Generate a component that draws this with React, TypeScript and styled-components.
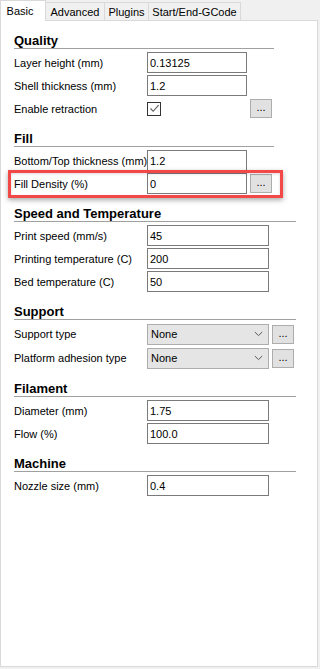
import styled, { createGlobalStyle, css } from "styled-components"

type FieldType = {
    label: string
    kind: 'text' | 'check' | 'select'
    value?: string
    more?: boolean
    highlight?: boolean
}

type SectionType = {
    title: string
    width: number
    control: number
    fields: FieldType[]
}

const tabs = [
    { title: 'Basic', width: 46 },
    { title: 'Advanced', width: 59 },
    { title: 'Plugins', width: 44 },
    { title: 'Start/End-GCode', width: 92 },
]

const sections: SectionType[] = [
    {
        title: 'Quality', width: 260, control: 100, fields: [
            { label: 'Layer height (mm)', kind: 'text', value: '0.13125' },
            { label: 'Shell thickness (mm)', kind: 'text', value: '1.2' },
            { label: 'Enable retraction', kind: 'check', more: true },
        ]
    },
    {
        title: 'Fill', width: 260, control: 100, fields: [
            { label: 'Bottom/Top thickness (mm)', kind: 'text', value: '1.2' },
            { label: 'Fill Density (%)', kind: 'text', value: '0', more: true, highlight: true },
        ]
    },
    {
        title: 'Speed and Temperature', width: 282, control: 122, fields: [
            { label: 'Print speed (mm/s)', kind: 'text', value: '45' },
            { label: 'Printing temperature (C)', kind: 'text', value: '200' },
            { label: 'Bed temperature (C)', kind: 'text', value: '50' },
        ]
    },
    {
        title: 'Support', width: 282, control: 122, fields: [
            { label: 'Support type', kind: 'select', value: 'None', more: true },
            { label: 'Platform adhesion type', kind: 'select', value: 'None', more: true },
        ]
    },
    {
        title: 'Filament', width: 282, control: 122, fields: [
            { label: 'Diameter (mm)', kind: 'text', value: '1.75' },
            { label: 'Flow (%)', kind: 'text', value: '100.0' },
        ]
    },
    {
        title: 'Machine', width: 282, control: 122, fields: [
            { label: 'Nozzle size (mm)', kind: 'text', value: '0.4' },
        ]
    },
]

const Field = ({ field, control }: { field: FieldType, control: number }) => {
    return (
        <Row $control={control} $highlight={field.highlight} $tall={field.kind === 'select'}>
            <Label>{field.label}</Label>
            {field.kind === 'text' && <TextInput readOnly value={field.value} />}
            {field.kind === 'check' && (
                <CheckBox>
                    <svg width="11" height="11" viewBox="0 0 11 11">
                        <path d="M1.5 5.5 L4.2 8.3 L9.6 2.2" fill="none" stroke="#5a5a5a" strokeWidth="1.1" />
                    </svg>
                </CheckBox>
            )}
            {field.kind === 'select' && (
                <Combo>
                    <span>{field.value}</span>
                    <svg width="9" height="6" viewBox="0 0 9 6">
                        <path d="M0.8 1 L4.5 4.6 L8.2 1" fill="none" stroke="#5a5a5a" strokeWidth="1" />
                    </svg>
                </Combo>
            )}
            {field.more && <MoreButton>...</MoreButton>}
        </Row>
    )
}

export default function App() {
    return (
        <>
            <GlobalStyle />
            <Window>
                <TabBar>
                    {tabs.map((t, i) => (
                        <Tab key={t.title} $active={i === 0} $width={t.width}>{t.title}</Tab>
                    ))}
                    <TabFiller />
                </TabBar>
                <Panel>
                    {sections.map(s => (
                        <Section key={s.title} $width={s.width}>
                            <Heading>{s.title}</Heading>
                            {s.fields.map(f => (
                                <Field key={f.label} field={f} control={s.control} />
                            ))}
                        </Section>
                    ))}
                </Panel>
            </Window>
        </>
    )
}

const GlobalStyle = createGlobalStyle`
    html, body {
        margin: 0;
        padding: 0;
        background: #f0f0f0;
    }
    body {
        font-family: "Liberation Sans", Arial, sans-serif;
        font-size: 11px;
        color: #000;
    }
`

const Window = styled.div`
    width: 320px;
    height: 669px;
    display: flex;
    flex-direction: column;
    background: #f0f0f0;
`

const TabBar = styled.div`
    display: flex;
    align-items: flex-end;
    width: 318px;
    height: 21px;
`

const Tab = styled.div<{ $active?: boolean, $width: number }>`
    box-sizing: border-box;
    display: flex;
    align-items: center;
    justify-content: center;
    width: ${p => p.$width}px;
    height: 19px;
    background: #f0f0f0;
    border-top: 1px solid #d9d9d9;
    border-right: 1px solid #d9d9d9;
    border-bottom: 1px solid #d9d9d9;
    white-space: nowrap;
    ${p => p.$active && css`
        height: 21px;
        padding-right: 6px;
        background: #fff;
        border-left: 1px solid #d9d9d9;
        border-bottom: none;
    `}
`

const TabFiller = styled.div`
    flex: 1;
    height: 21px;
    box-sizing: border-box;
    border-bottom: 1px solid #d9d9d9;
`

const Panel = styled.div`
    flex: 1;
    width: 318px;
    margin-bottom: 2px;
    box-sizing: border-box;
    padding: 12px 0 0 13px;
    background: #fff;
    border: 1px solid #d9d9d9;
    border-top: none;
`

const Section = styled.section<{ $width: number }>`
    width: ${p => p.$width}px;
    & + & {
        margin-top: 12px;
    }
`

const Heading = styled.h3`
    margin: 0 0 3px;
    font-size: 13px;
    font-weight: 700;
    line-height: 15px;
    border-bottom: 1px solid #a0a0a0;
`

const Row = styled.div<{ $control: number, $highlight?: boolean, $tall?: boolean }>`
    position: relative;
    display: grid;
    grid-template-columns: 130px ${p => p.$control}px 22px;
    column-gap: 3px;
    align-items: center;
    height: ${p => p.$tall ? 22 : 21}px;
    & + & {
        margin-top: 2px;
    }
    ${p => p.$highlight && css`
        &::after {
            content: '';
            position: absolute;
            left: -6px;
            right: -9px;
            top: -3px;
            bottom: -4px;
            border: 3px solid #f24848;
            box-shadow: 0 2px 5px rgba(0, 0, 0, 0.35), inset 0 1px 3px rgba(0, 0, 0, 0.15);
            pointer-events: none;
        }
    `}
`

const Label = styled.span`
    white-space: nowrap;
`

const TextInput = styled.input`
    box-sizing: border-box;
    width: 100%;
    height: 21px;
    margin: 0;
    padding: 0 2px;
    border: 1px solid #7a7a7a;
    border-radius: 0;
    background: #fff;
    font: inherit;
    color: #000;
    outline: none;
`

const CheckBox = styled.span`
    box-sizing: border-box;
    display: flex;
    align-items: center;
    justify-content: center;
    width: 14px;
    height: 14px;
    border: 1px solid #333;
    background: #fff;
`

const Combo = styled.div`
    box-sizing: border-box;
    display: flex;
    align-items: center;
    justify-content: space-between;
    height: 21px;
    padding: 0 5px 0 3px;
    border: 1px solid #adadad;
    background: #e5e5e5;
`

const MoreButton = styled.button`
    box-sizing: border-box;
    width: 22px;
    height: 19px;
    margin: 0;
    padding: 0 0 2px;
    border: 1px solid #adadad;
    border-radius: 0;
    background: #e1e1e1;
    font: inherit;
    color: #000;
    line-height: 1;
`
